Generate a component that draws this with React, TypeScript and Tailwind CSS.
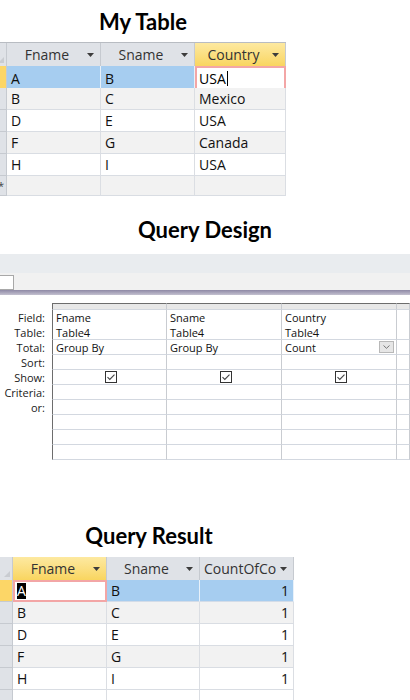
import React from "react";

const FONT = "font-['Open_Sans',sans-serif]";
const TITLE = "font-['Lato',sans-serif] font-bold text-[22px] leading-[26px] text-black";

function Arrow() {
  return (
    <svg width="7" height="4" viewBox="0 0 7 4" className="shrink-0">
      <path d="M0 0H7L3.5 4Z" fill="#3c3c3c" />
    </svg>
  );
}

function HeadCell({ label, selected, clip }: { label: string; selected?: boolean; clip?: boolean }) {
  return (
    <div
      className={`relative flex h-[23px] items-center border-r border-[#c6cad0] pl-1 pr-[6px] ${
        selected ? "bg-gradient-to-b from-[#fde9a0] to-[#f9d55e]" : "bg-[#dfe2e7]"
      }`}
    >
      <div className={`flex-1 overflow-hidden whitespace-nowrap text-[14px] text-[#333] ${clip ? "text-left" : "text-center"}`}>
        {label}
      </div>
      <div className="ml-1">
        <Arrow />
      </div>
    </div>
  );
}

function Corner() {
  return (
    <div className="relative h-[23px] border-r border-[#c6cad0] bg-[#dfe2e7] overflow-hidden">
      <div className="absolute bottom-[3px] right-[2px] h-0 w-0 border-b-[6px] border-l-[6px] border-b-[#c9ccd1] border-l-transparent" />
    </div>
  );
}

type Cell = { text?: string; kind?: "sel" | "edit" | "plain"; right?: boolean; caret?: boolean; hilite?: boolean };

function DataRow({
  cols,
  cells,
  bg,
  selector,
  h = 22,
}: {
  cols: string;
  cells: Cell[];
  bg: string;
  selector: "yellow" | "gray" | "star";
  h?: number;
}) {
  return (
    <div className={`grid ${cols}`} style={{ height: h }}>
      <div
        className={`flex items-center border-b border-r border-[#c6cad0] text-[11px] leading-none text-[#444] ${
          selector === "yellow" ? "bg-[#fcd667]" : "bg-[#dfe2e7]"
        }`}
      >
        {selector === "star" ? <span className="-ml-[2px]">*</span> : null}
      </div>
      {cells.map((c, i) => {
        if (c.kind === "edit") {
          return (
            <div key={i} className="flex items-center border-2 border-[#f3a6a6] bg-white pl-[2px] text-[14px] text-black">
              {c.hilite ? <span className="bg-black text-white leading-[16px]">{c.text}</span> : <span>{c.text}</span>}
              {c.caret ? <span className="ml-[1px] inline-block h-[15px] w-px bg-black" /> : null}
            </div>
          );
        }
        const cellBg = c.kind === "sel" ? "bg-[#a6cdf0]" : bg;
        const line = c.kind === "sel" ? "border-r-[#e8f1fa] border-b-[#d3dce8]" : "border-r-[#dbdee3] border-b-[#d9dde3]";
        return (
          <div
            key={i}
            className={`flex items-center border-b border-r ${line} ${cellBg} px-1 text-[14px] text-[#111] ${
              c.right ? "justify-end" : ""
            }`}
          >
            {c.text}
          </div>
        );
      })}
    </div>
  );
}

function MyTable() {
  const cols = "grid-cols-[7px_94px_94px_91px]";
  const rows: [string, string, string][] = [
    ["B", "C", "Mexico"],
    ["D", "E", "USA"],
    ["F", "G", "Canada"],
    ["H", "I", "USA"],
  ];
  return (
    <div className="w-[286px]">
      <div className={`grid ${cols} border-t border-[#b8bcc2]`}>
        <Corner />
        <HeadCell label="Fname" />
        <HeadCell label="Sname" />
        <HeadCell label="Country" selected />
      </div>
      <DataRow
        cols={cols}
        selector="yellow"
        bg="bg-white"
        cells={[
          { text: "A", kind: "sel" },
          { text: "B", kind: "sel" },
          { text: "USA", kind: "edit", caret: true },
        ]}
      />
      {rows.map((r, i) => (
        <DataRow
          key={i}
          cols={cols}
          selector="gray"
          bg={i % 2 === 0 ? "bg-[#f2f2f2]" : "bg-white"}
          cells={[{ text: r[0] }, { text: r[1] }, { text: r[2] }]}
        />
      ))}
      <DataRow cols={cols} selector="star" bg="bg-[#f2f2f2]" h={20} cells={[{}, {}, {}]} />
    </div>
  );
}

function Check() {
  return (
    <svg width="12" height="12" viewBox="0 0 12 12">
      <rect x="0.5" y="0.5" width="11" height="11" fill="white" stroke="#333" />
      <path d="M2.5 6.2L4.8 8.4L9.5 3.6" fill="none" stroke="#444" strokeWidth="1.1" />
    </svg>
  );
}

function DesignGrid() {
  const labels = ["Field:", "Table:", "Total:", "Sort:", "Show:", "Criteria:", "or:", "", "", ""];
  const data: (string | null)[][] = [
    ["Fname", "Sname", "Country"],
    ["Table4", "Table4", "Table4"],
    ["Group By", "Group By", "Count"],
    ["", "", ""],
    [null, null, null],
    ["", "", ""],
    ["", "", ""],
    ["", "", ""],
    ["", "", ""],
    ["", "", ""],
  ];
  const cols = "grid-cols-[52px_115px_115px_115px_13px]";
  return (
    <div className={`${FONT} text-[11px] text-[#111]`}>
      <div className={`grid ${cols}`}>
        <div className="h-[7px]" />
        {[0, 1, 2, 3].map((i) => (
          <div key={i} className={`h-[7px] border-t border-[#6d6d6d] bg-[#e8e8e8] ${i === 0 ? "border-l border-l-[#6d6d6d]" : ""} border-r border-r-[#c9ccd1] border-b border-b-[#d3d8e0]`} />
        ))}
      </div>
      {labels.map((lab, r) => (
        <div key={r} className={`grid ${cols} h-[15px]`}>
          <div className="flex items-center justify-end pr-[7px] leading-none text-[#1a1a1a]">{lab}</div>
          {[0, 1, 2, 3].map((c) => {
            const v = c < 3 ? data[r][c] : "";
            const noLine = r === 0;
            return (
              <div
                key={c}
                className={`relative flex items-center pl-[3px] leading-none border-r border-r-[#c9ccd1] ${
                  noLine ? "" : "border-b border-b-[#d3d8e0]"
                } ${c === 0 ? "border-l border-l-[#6d6d6d]" : ""} ${v === null ? "justify-center pl-0" : ""}`}
              >
                {v === null ? <Check /> : v}
                {r === 2 && c === 2 ? (
                  <div className="absolute right-[2px] top-[1px] flex h-[12px] w-[15px] items-center justify-center border border-[#b8b8b8] bg-[#e6e6e6]">
                    <svg width="7" height="4" viewBox="0 0 7 4">
                      <path d="M0.5 0.5L3.5 3.3L6.5 0.5" fill="none" stroke="#6a6a6a" strokeWidth="0.9" />
                    </svg>
                  </div>
                ) : null}
              </div>
            );
          })}
        </div>
      ))}
    </div>
  );
}

function ResultTable() {
  const cols = "grid-cols-[13px_94px_93px_94px]";
  const rows: [string, string][] = [
    ["B", "C"],
    ["D", "E"],
    ["F", "G"],
    ["H", "I"],
  ];
  return (
    <div className="w-[294px]">
      <div className={`grid ${cols}`}>
        <Corner />
        <HeadCell label="Fname" selected />
        <HeadCell label="Sname" />
        <HeadCell label="CountOfCountry" clip />
      </div>
      <DataRow
        cols={cols}
        selector="yellow"
        bg="bg-white"
        cells={[
          { text: "A", kind: "edit", hilite: true },
          { text: "B", kind: "sel" },
          { text: "1", kind: "sel", right: true },
        ]}
      />
      {rows.map((r, i) => (
        <DataRow
          key={i}
          cols={cols}
          selector="gray"
          bg={i % 2 === 0 ? "bg-[#f2f2f2]" : "bg-white"}
          cells={[{ text: r[0] }, { text: r[1] }, { text: "1", right: true }]}
        />
      ))}
      <DataRow cols={cols} selector="gray" bg="bg-white" h={14} cells={[{}, {}, {}]} />
    </div>
  );
}

export default function App() {
  return (
    <div className={`${FONT} w-[410px] h-[700px] overflow-hidden bg-white`}>
      <div className="w-[286px] h-[42px] flex items-center justify-center pt-[2px]">
        <span className={TITLE}>My Table</span>
      </div>
      <MyTable />
      <div className="h-[58px] flex items-end justify-center pb-[11px]">
        <span className={TITLE}>Query Design</span>
      </div>
      <div className="h-[19px] bg-[#e9ecef]" />
      <div className="h-[17px] bg-[#f1f1f1] pt-[2px]">
        <div className="h-[15px] w-[14px] border border-l-0 border-[#a8a8a8] bg-white" />
      </div>
      <div className="h-[5px] bg-gradient-to-b from-[#8e89a5] to-[#c4c1d0]" />
      <div className="h-[8px]" />
      <DesignGrid />
      <div className="h-[97px] flex items-end justify-center w-[298px] pb-[8px]">
        <span className={TITLE}>Query Result</span>
      </div>
      <ResultTable />
    </div>
  );
}
